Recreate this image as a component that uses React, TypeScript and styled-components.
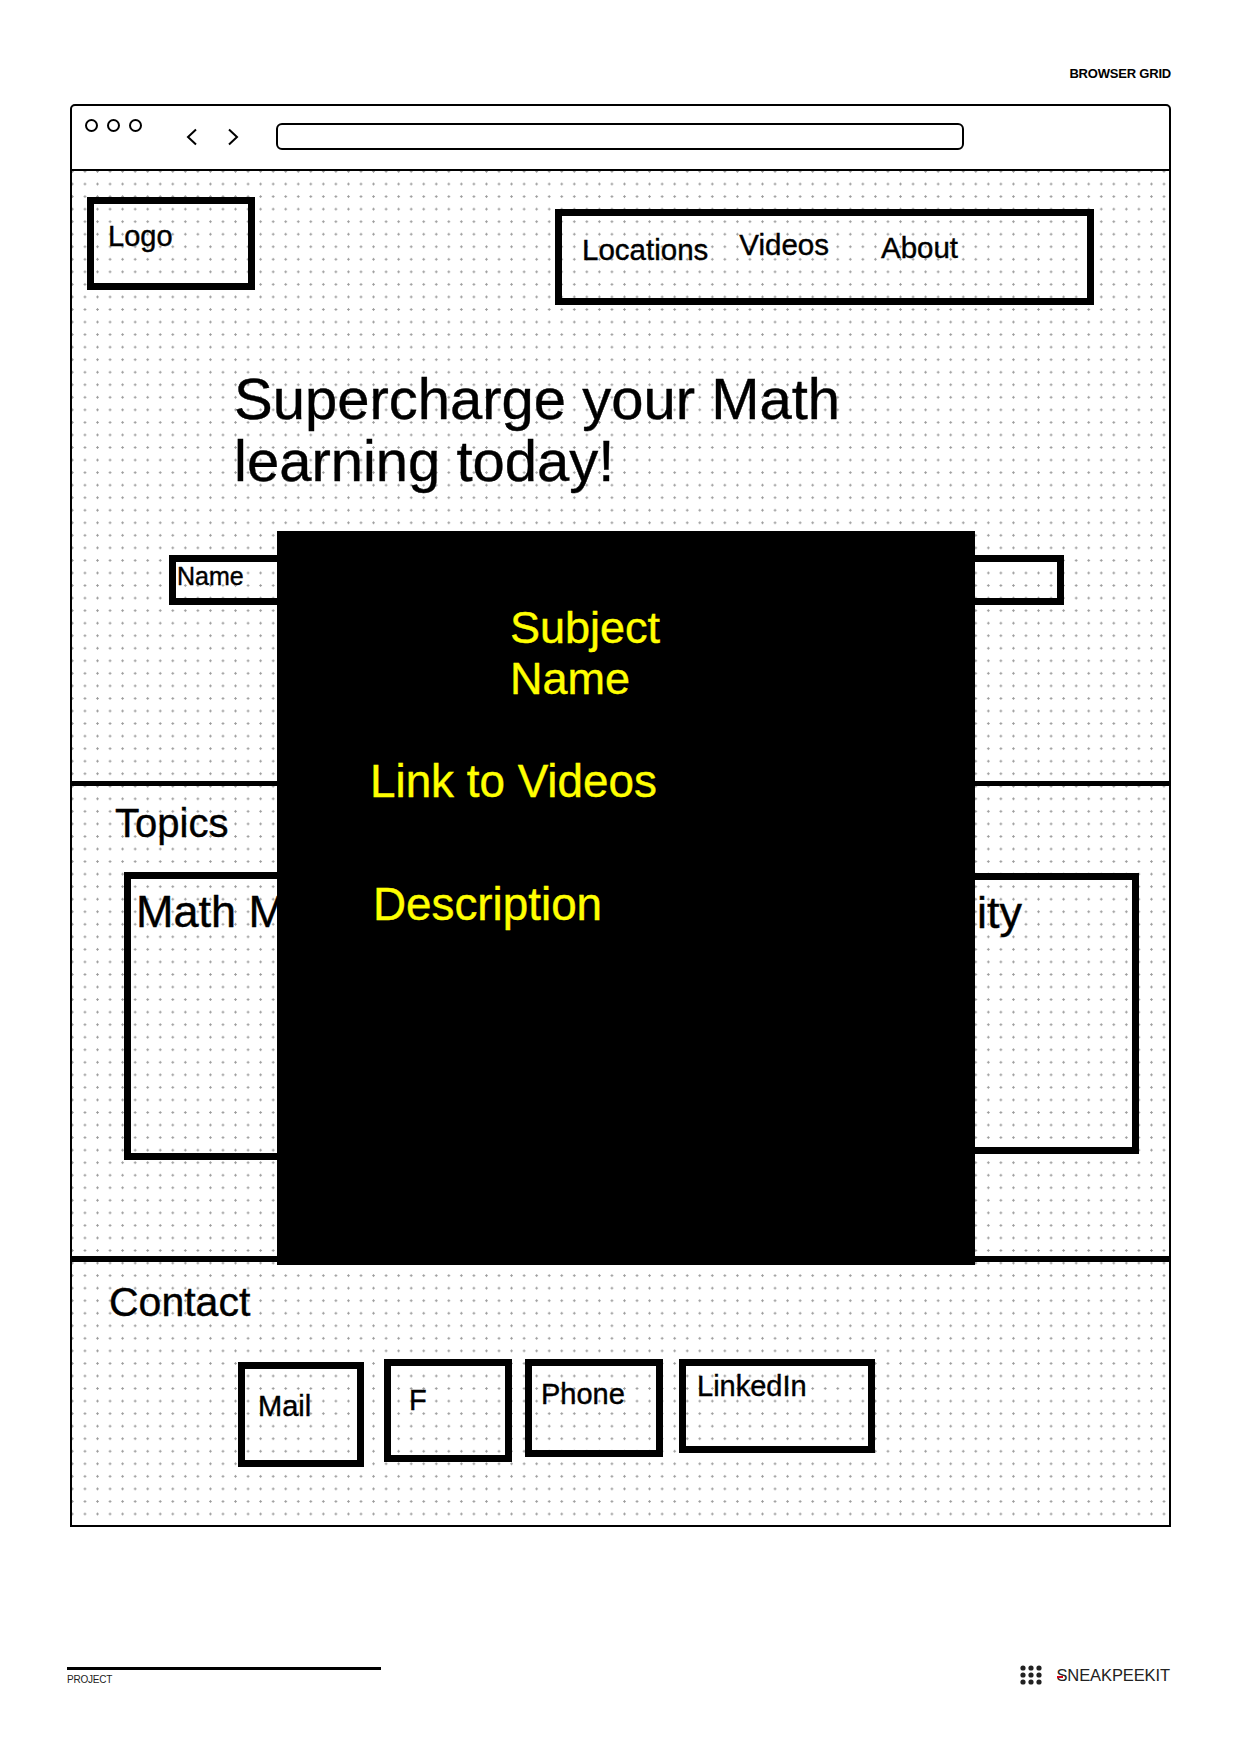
import React from "react";
import styled, { createGlobalStyle } from "styled-components";

const GlobalStyle = createGlobalStyle`
  html, body { margin: 0; padding: 0; background: #fff; }
  body { font-family: "Liberation Sans", Arial, sans-serif; color: #000; }
  *, *::before, *::after { box-sizing: border-box; }
`;

const Page = styled.div`
  position: relative;
  width: 1240px;
  height: 1754px;
  display: flex;
  flex-direction: column;
  overflow: hidden;
  background: #fff;
`;

const SheetLabel = styled.div`
  align-self: flex-end;
  margin: 67px 69px 0 0;
  font-size: 13px;
  line-height: 13px;
  font-weight: 700;
  letter-spacing: -0.2px;
`;

const Frame = styled.div`
  margin: 24px 0 0 70px;
  width: 1101px;
  height: 1423px;
  flex: none;
  border: 2px solid #000;
  border-radius: 5px 5px 0 0;
  display: flex;
  flex-direction: column;
  -webkit-text-stroke: 0.4px #000;
`;

const Toolbar = styled.div`
  height: 65px;
  flex: none;
  border-bottom: 2px solid #000;
  display: flex;
  align-items: flex-start;
  padding-left: 13px;
`;

const Lights = styled.div`
  display: flex;
  gap: 9px;
  margin-top: 13px;
`;

const Light = styled.span`
  width: 13px;
  height: 13px;
  border: 2px solid #000;
  border-radius: 50%;
`;

const Chevron = styled.svg<{ $gap: number }>`
  flex: none;
  margin-left: ${(p) => p.$gap}px;
  margin-top: 22px;
`;

const AddressBar = styled.div`
  margin: 17px 0 0 37px;
  width: 688px;
  height: 27px;
  border: 2px solid #000;
  border-radius: 6px;
`;

const Canvas = styled.div`
  flex: 1;
  display: flex;
  flex-direction: column;
  background-image: radial-gradient(circle, #9a9a9a 0.9px, transparent 1.4px);
  background-size: 12.55px 12.55px;
  background-position: 6.7px -5.8px;
`;

const Hero = styled.section`
  height: 610px;
  flex: none;
  display: flex;
  flex-direction: column;
  align-items: flex-start;
  padding: 26px 0 0 15px;
`;

const HeaderRow = styled.div`
  display: flex;
  align-items: flex-start;
`;

const LogoBox = styled.div`
  width: 168px;
  height: 93px;
  border: 7px solid #000;
  padding: 18px 0 0 14px;
  font-size: 29px;
  line-height: 29px;
`;

const NavBox = styled.nav`
  margin: 12px 0 0 300px;
  width: 539px;
  height: 96px;
  border: 7px solid #000;
  display: flex;
  align-items: flex-start;
  padding-left: 20px;
`;

const NavItem = styled.span<{ $top: number; $gap: number }>`
  margin-top: ${(p) => p.$top}px;
  margin-left: ${(p) => p.$gap}px;
  font-size: 29.5px;
  line-height: 30px;
  white-space: nowrap;
`;

const Headline = styled.h1`
  margin: 63px 0 0 147px;
  font-size: 58px;
  line-height: 62px;
  font-weight: 400;
`;

const NameField = styled.div`
  margin: 63px 0 0 82px;
  width: 895px;
  height: 50px;
  border: 7px solid #000;
  padding: 2px 0 0 1px;
  font-size: 25px;
  line-height: 25px;
`;

const Topics = styled.section`
  height: 475px;
  flex: none;
  border-top: 5px solid #000;
  padding: 17px 0 0 43px;
  display: flex;
  flex-direction: column;
  align-items: flex-start;
`;

const SectionTitle = styled.h2<{ $size: number }>`
  margin: 0;
  font-size: ${(p) => p.$size}px;
  line-height: ${(p) => p.$size}px;
  font-weight: 400;
`;

const CardRow = styled.div`
  display: flex;
  align-items: flex-start;
  margin: 29px 0 0 9px;
`;

const TopicCard = styled.div<{ $w: number; $h: number; $top: number; $gap: number }>`
  width: ${(p) => p.$w}px;
  height: ${(p) => p.$h}px;
  margin-top: ${(p) => p.$top}px;
  margin-left: ${(p) => p.$gap}px;
  border: 7px solid #000;
  padding: 10px 0 0 5px;
  font-size: 45px;
  line-height: 45px;
  white-space: nowrap;
  overflow: hidden;
`;

const Contact = styled.section`
  flex: 1;
  border-top: 6px solid #000;
  padding: 20px 0 0 37px;
  display: flex;
  flex-direction: column;
  align-items: flex-start;
`;

const ContactRow = styled.div`
  display: flex;
  align-items: flex-start;
  margin: 36px 0 0 129px;
`;

const ContactButton = styled.div<{
  $w: number;
  $h: number;
  $top: number;
  $gap: number;
  $padTop: number;
  $padLeft: number;
}>`
  width: ${(p) => p.$w}px;
  height: ${(p) => p.$h}px;
  margin-top: ${(p) => p.$top}px;
  margin-left: ${(p) => p.$gap}px;
  border: 7px solid #000;
  padding: ${(p) => p.$padTop}px 0 0 ${(p) => p.$padLeft}px;
  font-size: 29px;
  line-height: 29px;
`;

const Modal = styled.div`
  position: absolute;
  top: 531px;
  left: 277px;
  width: 698px;
  height: 734px;
  background: #000;
  color: #ffff00;
  -webkit-text-stroke: 0.4px #ffff00;
  display: flex;
  flex-direction: column;
  align-items: flex-start;
  padding-top: 71px;
  font-size: 45px;
  line-height: 51px;
`;

const ModalLine = styled.div<{ $left: number; $top: number; $size?: number }>`
  margin-left: ${(p) => p.$left}px;
  margin-top: ${(p) => p.$top}px;
  font-size: ${(p) => p.$size ?? 45}px;
  white-space: nowrap;
`;

const Footer = styled.footer`
  margin-top: 140px;
  padding: 0 70px 0 67px;
  display: flex;
  justify-content: space-between;
  align-items: flex-start;
`;

const ProjectBlock = styled.div`
  display: flex;
  flex-direction: column;
`;

const ProjectRule = styled.div`
  width: 314px;
  border-top: 3px solid #000;
`;

const ProjectLabel = styled.span`
  margin-top: 5px;
  font-size: 10px;
  line-height: 10px;
  color: #222;
  letter-spacing: -0.2px;
`;

const Brand = styled.div`
  display: flex;
  align-items: flex-start;
  gap: 14px;
  margin-top: -2px;
`;

const BrandName = styled.span`
  position: relative;
  margin-top: 2px;
  font-size: 16.5px;
  line-height: 17px;
  color: #222;
  letter-spacing: -0.1px;
  &::before {
    content: "";
    position: absolute;
    left: 1px;
    top: 9px;
    width: 6px;
    height: 1.5px;
    background: #d0021b;
  }
`;

const ChevronLeft = ({ gap }: { gap: number }) => (
  <Chevron $gap={gap} width="12" height="18" viewBox="0 0 12 18">
    <polyline points="10,1.5 2,9 10,16.5" fill="none" stroke="#000" strokeWidth="2" />
  </Chevron>
);

const ChevronRight = ({ gap }: { gap: number }) => (
  <Chevron $gap={gap} width="12" height="18" viewBox="0 0 12 18">
    <polyline points="2,1.5 10,9 2,16.5" fill="none" stroke="#000" strokeWidth="2" />
  </Chevron>
);

const BrandMark = () => (
  <svg width="22" height="20" viewBox="0 0 22 20">
    {[0, 1, 2].map((r) =>
      [0, 1, 2].map((c) => (
        <circle key={`${r}-${c}`} cx={3 + c * 8} cy={3 + r * 7} r="2.6" fill="#222" />
      ))
    )}
  </svg>
);

const contacts = [
  { label: "Mail", w: 126, h: 105, top: 3, gap: 0, padTop: 23, padLeft: 13 },
  { label: "F", w: 128, h: 103, top: 0, gap: 20, padTop: 20, padLeft: 18 },
  { label: "Phone", w: 138, h: 98, top: 0, gap: 13, padTop: 14, padLeft: 9 },
  { label: "LinkedIn", w: 196, h: 94, top: 0, gap: 16, padTop: 6, padLeft: 11 },
];

export default function App() {
  return (
    <Page>
      <GlobalStyle />
      <SheetLabel>BROWSER GRID</SheetLabel>
      <Frame>
        <Toolbar>
          <Lights>
            <Light />
            <Light />
            <Light />
          </Lights>
          <ChevronLeft gap={44} />
          <ChevronRight gap={29} />
          <AddressBar />
        </Toolbar>
        <Canvas>
          <Hero>
            <HeaderRow>
              <LogoBox>Logo</LogoBox>
              <NavBox>
                <NavItem $top={19} $gap={0}>Locations</NavItem>
                <NavItem $top={14} $gap={31}>Videos</NavItem>
                <NavItem $top={17} $gap={52}>About</NavItem>
              </NavBox>
            </HeaderRow>
            <Headline>
              Supercharge your Math
              <br />
              learning today!
            </Headline>
            <NameField>Name</NameField>
          </Hero>
          <Topics>
            <SectionTitle $size={40}>Topics</SectionTitle>
            <CardRow>
              <TopicCard $w={516} $h={288} $top={0} $gap={0}>Math Modules</TopicCard>
              <TopicCard $w={469} $h={281} $top={1} $gap={30}>Math Community</TopicCard>
            </CardRow>
          </Topics>
          <Contact>
            <SectionTitle $size={41}>Contact</SectionTitle>
            <ContactRow>
              {contacts.map((c) => (
                <ContactButton
                  key={c.label}
                  $w={c.w}
                  $h={c.h}
                  $top={c.top}
                  $gap={c.gap}
                  $padTop={c.padTop}
                  $padLeft={c.padLeft}
                >
                  {c.label}
                </ContactButton>
              ))}
            </ContactRow>
          </Contact>
        </Canvas>
      </Frame>
      <Footer>
        <ProjectBlock>
          <ProjectRule />
          <ProjectLabel>PROJECT</ProjectLabel>
        </ProjectBlock>
        <Brand>
          <BrandMark />
          <BrandName>SNEAKPEEKIT</BrandName>
        </Brand>
      </Footer>
      <Modal>
        <ModalLine $left={233} $top={0}>
          Subject
          <br />
          Name
        </ModalLine>
        <ModalLine $left={93} $top={52} $size={45.8}>Link to Videos</ModalLine>
        <ModalLine $left={96} $top={72} $size={45.8}>Description</ModalLine>
      </Modal>
    </Page>
  );
}
